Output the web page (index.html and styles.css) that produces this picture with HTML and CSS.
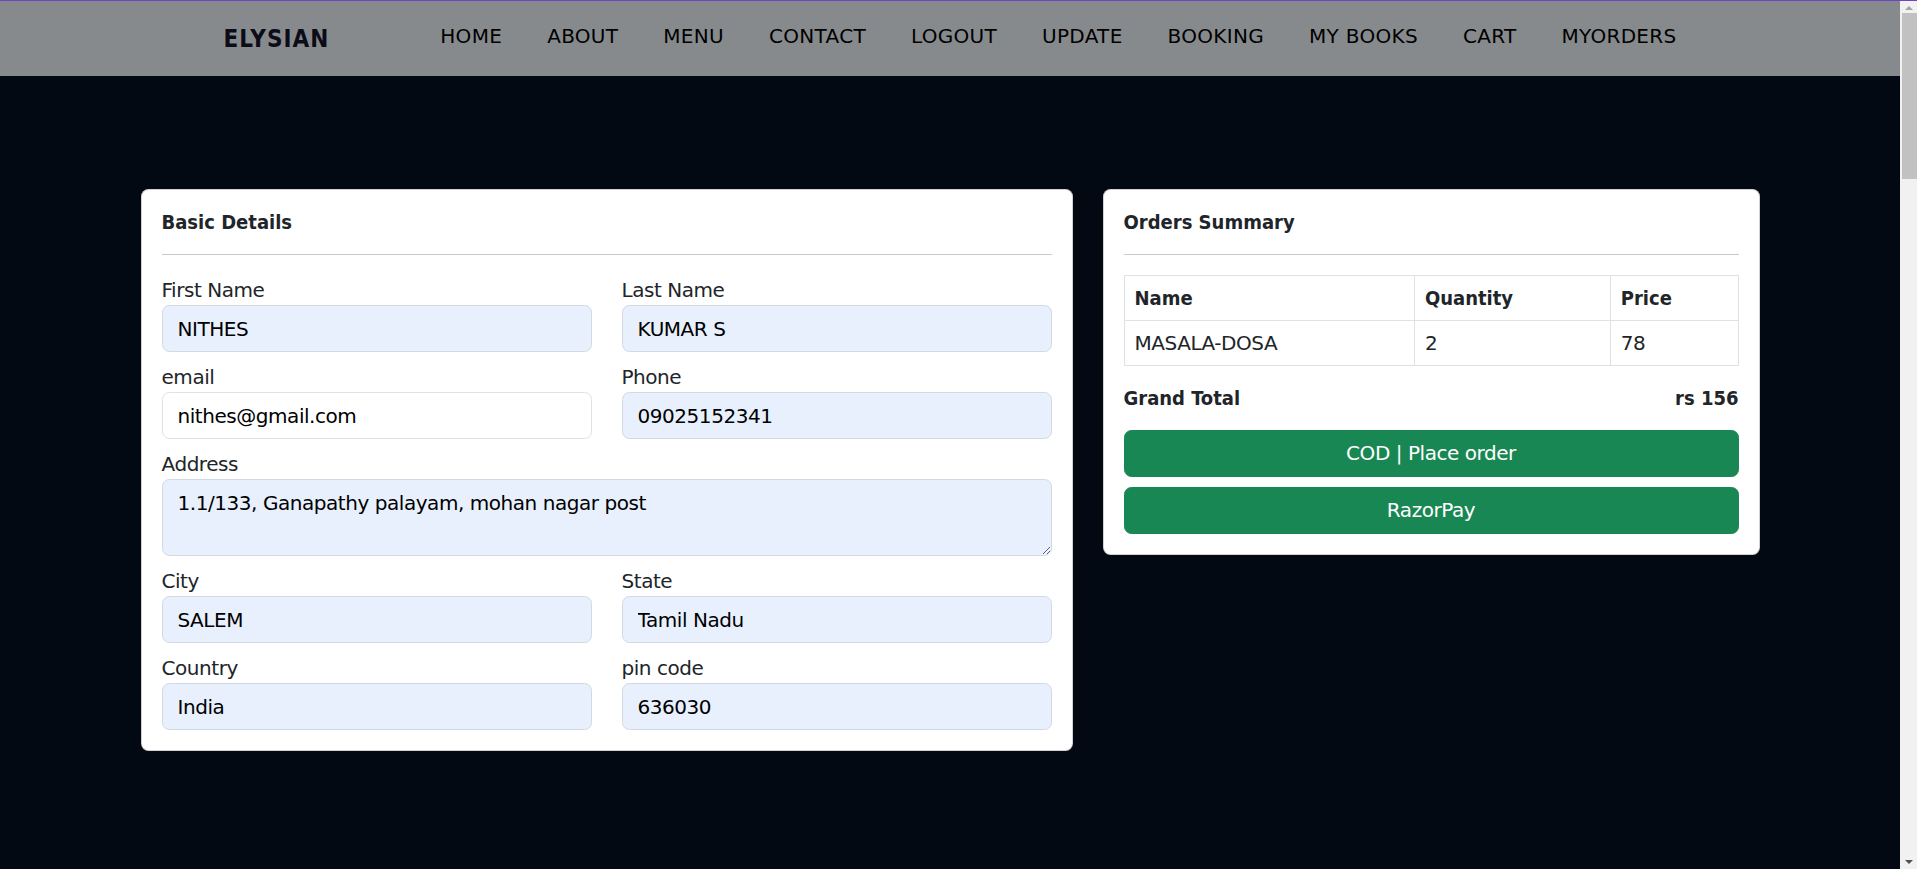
FILE: index.html
```html
<!DOCTYPE html>
<html lang="en">
<head>
<meta charset="utf-8">
<title>Elysian - Checkout</title>
<link rel="stylesheet" href="styles.css">
</head>
<body>
<nav class="navbar">
  <a class="brand" href="#">ELYSIAN</a>
  <ul class="nav-links">
    <li><a href="#">HOME</a></li>
    <li><a href="#">ABOUT</a></li>
    <li><a href="#">MENU</a></li>
    <li><a href="#">CONTACT</a></li>
    <li><a href="#">LOGOUT</a></li>
    <li><a href="#">UPDATE</a></li>
    <li><a href="#">BOOKING</a></li>
    <li><a href="#">MY BOOKS</a></li>
    <li><a href="#">CART</a></li>
    <li><a href="#">MYORDERS</a></li>
  </ul>
</nav>
<main class="page">
  <div class="checkout">
    <section class="card">
      <h6 class="card-title">Basic Details</h6>
      <hr class="divider">
      <div class="form-grid">
        <div class="field">
          <label class="field-label" for="fname">First Name</label>
          <input class="form-control autofill" id="fname" type="text" value="NITHES">
        </div>
        <div class="field">
          <label class="field-label" for="lname">Last Name</label>
          <input class="form-control autofill" id="lname" type="text" value="KUMAR S">
        </div>
        <div class="field">
          <label class="field-label" for="email">email</label>
          <input class="form-control" id="email" type="text" value="nithes@gmail.com">
        </div>
        <div class="field">
          <label class="field-label" for="phone">Phone</label>
          <input class="form-control autofill" id="phone" type="text" value="09025152341">
        </div>
        <div class="field field-wide">
          <label class="field-label" for="address">Address</label>
          <textarea class="form-control autofill address" id="address" rows="2">1.1/133, Ganapathy palayam, mohan nagar post</textarea>
        </div>
        <div class="field">
          <label class="field-label" for="city">City</label>
          <input class="form-control autofill" id="city" type="text" value="SALEM">
        </div>
        <div class="field">
          <label class="field-label" for="state">State</label>
          <input class="form-control autofill" id="state" type="text" value="Tamil Nadu">
        </div>
        <div class="field">
          <label class="field-label" for="country">Country</label>
          <input class="form-control autofill" id="country" type="text" value="India">
        </div>
        <div class="field">
          <label class="field-label" for="pin">pin code</label>
          <input class="form-control autofill" id="pin" type="text" value="636030">
        </div>
      </div>
    </section>
    <section class="card">
      <h6 class="card-title">Orders Summary</h6>
      <hr class="divider">
      <table class="summary-table">
        <thead>
          <tr><th class="col-name">Name</th><th class="col-qty">Quantity</th><th class="col-price">Price</th></tr>
        </thead>
        <tbody>
          <tr><td>MASALA-DOSA</td><td>2</td><td>78</td></tr>
        </tbody>
      </table>
      <div class="total">
        <span>Grand Total</span>
        <span>rs 156</span>
      </div>
      <button class="btn" type="button">COD | Place order</button>
      <button class="btn" type="button">RazorPay</button>
    </section>
  </div>
</main>
<div class="scrollbar" aria-hidden="true">
  <span class="scroll-arrow scroll-up"></span>
  <span class="scroll-thumb"></span>
  <span class="scroll-arrow scroll-down"></span>
</div>
</body>
</html>
```
FILE: styles.css
```css
html {
  margin: 0;
  background: #020912;
  border-top: 1px solid #7341c1;
}
body {
  margin: 0 17px 0 0;
  background: #020912;
  font-family: "DejaVu Sans", sans-serif;
  font-size: 20px;
  line-height: 1.5;
  letter-spacing: -0.45px;
  color: #212529;
}

.navbar {
  height: 75px;
  background: #878a8c;
  display: flex;
  align-items: center;
  justify-content: center;
}
.brand {
  font-family: "DejaVu Sans Condensed", "DejaVu Sans", sans-serif;
  font-weight: bold;
  font-size: 24px;
  line-height: 36px;
  letter-spacing: 1px;
  color: #0c0c18;
  text-decoration: none;
  margin-right: 111px;
}
.nav-links {
  display: flex;
  gap: 45px;
  list-style: none;
  margin: 0 0 6px;
  padding: 0;
  letter-spacing: 0.3px;
}
.nav-links a {
  color: #000;
  text-decoration: none;
}

.page {
  padding-top: 113px;
  padding-bottom: 200px;
}
.checkout {
  display: grid;
  grid-template-columns: 932px 657px;
  column-gap: 30px;
  justify-content: center;
  align-items: start;
}
.card {
  background: #fff;
  border: 1px solid rgba(0, 0, 0, 0.175);
  border-radius: 7.5px;
  padding: 20px;
}
.card-title,
.summary-table th,
.total {
  font-family: "DejaVu Sans Condensed", "DejaVu Sans", sans-serif;
  font-weight: bold;
  letter-spacing: 0;
}
.card-title {
  margin: 0;
  font-size: 20px;
  line-height: 24px;
}
.divider {
  margin: 20px 0;
  border: 0;
  border-top: 1px solid #c8c9ca;
}

.form-grid {
  display: grid;
  grid-template-columns: 1fr 1fr;
  column-gap: 30px;
  row-gap: 10px;
}
.field-wide {
  grid-column: 1 / -1;
}
.field-label {
  display: block;
  line-height: 30px;
}
.form-control {
  display: block;
  width: 100%;
  box-sizing: border-box;
  margin: 0;
  padding: 7.5px 15px;
  font: inherit;
  letter-spacing: inherit;
  line-height: 30px;
  color: #000;
  background: #fff;
  border: 1px solid #dee2e6;
  border-radius: 7.5px;
}
.autofill {
  background: #e8f0fe;
  border-color: #d3d9e2;
}
.address {
  height: 77px;
  resize: vertical;
}

.summary-table {
  width: 100%;
  border-collapse: collapse;
  margin-bottom: 20px;
}
.summary-table th,
.summary-table td {
  border: 1px solid #dee2e6;
  padding: 7px 10px;
  text-align: left;
  line-height: 30px;
}
.col-name { width: 47.3%; }
.col-qty { width: 31.9%; }
.col-price { width: 20.8%; }

.total {
  display: flex;
  justify-content: space-between;
  line-height: 24px;
  margin-bottom: 20px;
}
.btn {
  display: block;
  width: 100%;
  box-sizing: border-box;
  margin: 0;
  padding: 7px 15px 8px;
  font: inherit;
  letter-spacing: inherit;
  line-height: 30px;
  color: #fff;
  background: #198754;
  border: 1px solid #198754;
  border-radius: 7.5px;
  cursor: pointer;
}
.btn + .btn {
  margin-top: 10px;
}

.scrollbar {
  position: fixed;
  top: 1px;
  right: 0;
  bottom: 0;
  width: 17px;
  background: #f1f1f1;
}
.scroll-thumb {
  position: absolute;
  top: 12px;
  left: 2px;
  right: 0;
  height: 166px;
  background: #c1c1c1;
}
.scroll-arrow {
  position: absolute;
  left: 5px;
  width: 0;
  height: 0;
  border-left: 4px solid transparent;
  border-right: 4px solid transparent;
}
.scroll-up {
  top: 5px;
  border-bottom: 4px solid #a3a3a3;
}
.scroll-down {
  bottom: 5px;
  border-top: 4px solid #505050;
}
```
